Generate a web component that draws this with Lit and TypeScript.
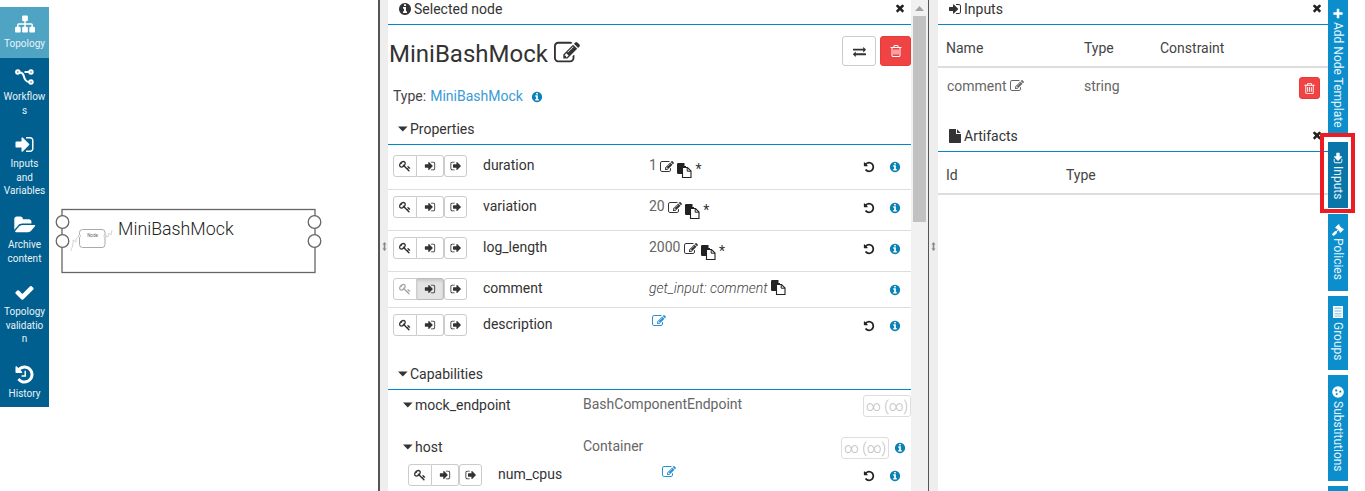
import { LitElement, html, css } from 'lit';
import { customElement } from 'lit/decorators.js';

// font-awesome 4 outlines, 1792 grid
const P: Record<string, string> = {
  sitemap: 'M1792 1248v320q0 40-28 68t-68 28h-320q-40 0-68-28t-28-68v-320q0-40 28-68t68-28h96v-192h-512v192h96q40 0 68 28t28 68v320q0 40-28 68t-68 28h-320q-40 0-68-28t-28-68v-320q0-40 28-68t68-28h96v-192h-512v192h96q40 0 68 28t28 68v320q0 40-28 68t-68 28h-320q-40 0-68-28t-28-68v-320q0-40 28-68t68-28h96v-192q0-52 38-90t90-38h512v-192h-96q-40 0-68-28t-28-68v-320q0-40 28-68t68-28h320q40 0 68 28t28 68v320q0 40-28 68t-68 28h-96v192h512q52 0 90 38t38 90v192h96q40 0 68 28t28 68z',
  signIn: 'M1312 896q0 26-19 45l-544 544q-19 19-45 19t-45-19-19-45v-288h-448q-26 0-45-19t-19-45v-384q0-26 19-45t45-19h448v-288q0-26 19-45t45-19 45 19l544 544q19 19 19 45zm352-352v704q0 119-84.5 203.5t-203.5 84.5h-320q-13 0-22.5-9.5t-9.5-22.5v-64q0-13 9.5-22.5t22.5-9.5h320q66 0 113-47t47-113v-704q0-66-47-113t-113-47h-320q-13 0-22.5-9.5t-9.5-22.5v-64q0-13 9.5-22.5t22.5-9.5h320q119 0 203.5 84.5t84.5 203.5z',
  signOut: 'M704 1440q0 4 1 20t.5 26.5-3 23.5-10 19.5-20.5 6.5h-320q-119 0-203.5-84.5t-84.5-203.5v-704q0-119 84.5-203.5t203.5-84.5h320q13 0 22.5 9.5t9.5 22.5q0 4 1 20t.5 26.5-3 23.5-10 19.5-20.5 6.5h-320q-66 0-113 47t-47 113v704q0 66 47 113t113 47h312l11.5 1 11.5 3 8 5.5 7 9 2 13.5zm928-544q0 26-19 45l-544 544q-19 19-45 19t-45-19-19-45v-288h-448q-26 0-45-19t-19-45v-384q0-26 19-45t45-19h448v-288q0-26 19-45t45-19 45 19l544 544q19 19 19 45z',
  key: 'M832 512q0-80-56-136t-136-56-136 56-56 136q0 42 19 83-41-19-83-19-80 0-136 56t-56 136 56 136 136 56 136-56 56-136q0-42-19-83 41 19 83 19 80 0 136-56t56-136zm851 704q0 17-49 66t-66 49q-9 0-28.5-16t-36.5-33-38.5-40-24.5-26l-96 96 220 220q28 28 28 68 0 42-39 81t-81 39q-40 0-68-28l-671-671q-176 131-365 131-163 0-265.5-102.5t-102.5-265.5q0-160 95-313t248-248 313-95q163 0 265.5 102.5t102.5 265.5q0 189-131 365l355 355 96-96q-3-3-26-24.5t-40-38.5-33-36.5-16-28.5q0-17 49-66t66-49q13 0 23 10 6 6 46 44.5t82 79.5 86.5 86 73 78 28.5 41z',
  edit: 'M888 1184l116-116-152-152-116 116v56h96v96h56zm440-720q-16-16-33 1l-350 350q-17 17-1 33t33-1l350-350q17-17 1-33zm80 594v190q0 119-84.5 203.5t-203.5 84.5h-832q-119 0-203.5-84.5t-84.5-203.5v-832q0-119 84.5-203.5t203.5-84.5h832q63 0 117 25 15 7 18 23 3 17-9 29l-49 49q-14 14-32 8-23-6-45-6h-832q-66 0-113 47t-47 113v832q0 66 47 113t113 47h832q66 0 113-47t47-113v-126q0-13 9-22l64-64q15-15 35-7t20 29zm-96-738l288 288-672 672h-288v-288zm444 132l-92 92-288-288 92-92q28-28 68-28t68 28l152 152q28 28 28 68t-28 68z',
  info: 'M1152 1376v-160q0-14-9-23t-23-9h-96v-512q0-14-9-23t-23-9h-320q-14 0-23 9t-9 23v160q0 14 9 23t23 9h96v320h-96q-14 0-23 9t-9 23v160q0 14 9 23t23 9h448q14 0 23-9t9-23zm-128-896v-160q0-14-9-23t-23-9h-192q-14 0-23 9t-9 23v160q0 14 9 23t23 9h192q14 0 23-9t9-23zm640 416q0 209-103 385.5t-279.5 279.5-385.5 103-385.5-103-279.5-279.5-103-385.5 103-385.5 279.5-279.5 385.5-103 385.5 103 279.5 279.5 103 385.5z',
  times: 'M1490 1322q0 40-28 68l-136 136q-28 28-68 28t-68-28l-294-294-294 294q-28 28-68 28t-68-28l-136-136q-28-28-28-68t28-68l294-294-294-294q-28-28-28-68t28-68l136-136q28-28 68-28t68 28l294 294 294-294q28-28 68-28t68 28l136 136q28 28 28 68t-28 68l-294 294 294 294q28 28 28 68z',
  trash: 'M704 736v576q0 14-9 23t-23 9h-64q-14 0-23-9t-9-23v-576q0-14 9-23t23-9h64q14 0 23 9t9 23zm256 0v576q0 14-9 23t-23 9h-64q-14 0-23-9t-9-23v-576q0-14 9-23t23-9h64q14 0 23 9t9 23zm256 0v576q0 14-9 23t-23 9h-64q-14 0-23-9t-9-23v-576q0-14 9-23t23-9h64q14 0 23 9t9 23zm128 724v-948h-896v948q0 22 7 40.5t14.5 27 10.5 8.5h832q3 0 10.5-8.5t14.5-27 7-40.5zm-672-1076h448l-48-117q-7-9-17-11h-317q-10 2-17 11zm928 32v64q0 14-9 23t-23 9h-96v948q0 83-47 143.5t-113 60.5h-832q-66 0-113-63t-47-145v-944h-96q-14 0-23-9t-9-23v-64q0-14 9-23t23-9h309l70-167q15-37 54-63t79-26h320q40 0 79 26t54 63l70 167h309q14 0 23 9t9 23z',
  check: 'M1671 566q0 40-28 68l-724 724-136 136q-28 28-68 28t-68-28l-136-136-362-362q-28-28-28-68t28-68l136-136q28-28 68-28t68 28l294 295 656-657q28-28 68-28t68 28l136 136q28 28 28 68z',
  history: 'M1664 896q0 156-61 298t-164 245-245 164-298 61q-172 0-327-72.5t-264-204.5q-7-10-6.5-22.5t8.5-20.5l137-138q10-9 25-9 16 2 23 12 73 95 179 147t225 52q104 0 198.5-40.5t163.5-109.5 109.5-163.5 40.5-198.5-40.5-198.5-109.5-163.5-163.5-109.5-198.5-40.5q-98 0-188 35.5t-160 101.5l137 138q31 30 14 69-17 40-59 40h-448q-26 0-45-19t-19-45v-448q0-42 40-59 39-17 69 14l130 129q107-101 244.5-156.5t284.5-55.5q156 0 298 61t245 164 164 245 61 298zm-640-288v448q0 14-9 23t-23 9h-320q-14 0-23-9t-9-23v-64q0-14 9-23t23-9h224v-352q0-14 9-23t23-9h64q14 0 23 9t9 23z',
  undo: 'M1664 896q0 156-61 298t-164 245-245 164-298 61q-172 0-327-72.5t-264-204.5q-7-10-6.5-22.5t8.5-20.5l137-138q10-9 25-9 16 2 23 12 73 95 179 147t225 52q104 0 198.5-40.5t163.5-109.5 109.5-163.5 40.5-198.5-40.5-198.5-109.5-163.5-163.5-109.5-198.5-40.5q-98 0-188 35.5t-160 101.5l137 138q31 30 14 69-17 40-59 40h-448q-26 0-45-19t-19-45v-448q0-42 40-59 39-17 69 14l130 129q107-101 244.5-156.5t284.5-55.5q156 0 298 61t245 164 164 245 61 298z',
  exchange: 'M1792 1184v192q0 13-9.5 22.5t-22.5 9.5h-1376v192q0 13-9.5 22.5t-22.5 9.5q-12 0-24-10l-319-320q-9-9-9-22 0-14 9-23l320-320q9-9 23-9 13 0 22.5 9.5t9.5 22.5v192h1376q13 0 22.5 9.5t9.5 22.5zm0-544q0 14-9 23l-320 320q-9 9-23 9-13 0-22.5-9.5t-9.5-22.5v-192h-1376q-13 0-22.5-9.5t-9.5-22.5v-192q0-13 9.5-22.5t22.5-9.5h1376v-192q0-14 9-23t23-9q12 0 24 10l319 319q9 9 9 23z',
  file: 'M1152 512v-472q22 14 36 28l408 408q14 14 28 36h-472zm-128 32q0 40 28 68t68 28h544v1056q0 40-28 68t-68 28h-1344q-40 0-68-28t-28-68v-1600q0-40 28-68t68-28h800v544z',
  plus: 'M1600 736v192q0 40-28 68t-68 28h-416v416q0 40-28 68t-68 28h-192q-40 0-68-28t-28-68v-416h-416q-40 0-68-28t-28-68v-192q0-40 28-68t68-28h416v-416q0-40 28-68t68-28h192q40 0 68 28t28 68v416h416q40 0 68 28t28 68z',
  folder: 'M1879 952q0 31-31 66l-336 396q-43 51-120.5 86.5t-143.5 35.5h-1088q-34 0-60.5-13t-26.5-43q0-31 31-66l336-396q43-51 120.5-86.5t143.5-35.5h1088q34 0 60.5 13t26.5 43zm-343-344v160h-832q-94 0-197 47.5t-164 119.5l-337 396-5 6q0-4-.5-12.5t-.5-12.5v-960q0-92 66-158t158-66h320q92 0 158 66t66 158v32h544q92 0 158 66t66 158z',
  gavel: 'M1771 1536q0 53-37 90l-107 108q-39 37-91 37-53 0-90-37l-363-364q-38-36-38-90 0-53 43-96l-256-256-126 126q-14 14-34 14t-34-14q2 2 12.5 12t12.5 13 10 11.5 10 13.5 6 13.5 5.5 16.5 1.5 18q0 38-28 68-3 3-16.5 18t-19 20.5-18.5 16.5-22 15.5-22 9-26 4.5q-40 0-68-28l-408-408q-28-28-28-68 0-13 4.5-26t9-22 15.5-22 16.5-18.5 20.5-19 18-16.5q30-28 68-28 10 0 18 1.5t16.5 5.5 13.5 6 13.5 10 11.5 10 13 12.5 12 12.5q-14-14-14-34t14-34l348-348q14-14 34-14t34 14q-2-2-12.5-12t-12.5-13-10-11.5-10-13.5-6-13.5-5.5-16.5-1.5-18q0-38 28-68 3-3 16.5-18t19-20.5 18.5-16.5 22-15.5 22-9 26-4.5q40 0 68 28l408 408q28 28 28 68 0 13-4.5 26t-9 22-15.5 22-16.5 18.5-20.5 19-18 16.5q-30 28-68 28-10 0-18-1.5t-16.5-5.5-13.5-6-13.5-10-11.5-10-13-12.5-12-12.5q14 14 14 34t-14 34l-126 126 256 256q43-43 96-43 52 0 91 37l363 363q37 39 37 91z',
};

const fa = (name: string, size: number, cls = '') =>
  html`<svg class="fa ${cls}" width=${size} height=${size} viewBox="0 0 1792 1792" fill="currentColor"><path d=${P[name]}></path></svg>`;

const caret = html`<svg class="caret" width="10" height="6" viewBox="0 0 10 6"><path d="M0 .5h9.6L4.8 5.6z" fill="#333"></path></svg>`;

// solid sheet behind an outlined one, not the stock fa-files icon
const copyIcon = html`<svg class="copy" width="15" height="15" viewBox="0 0 15 15">
  <path d="M0 1.2Q0 0 1.2 0H7.5V3H9V11H1.2Q0 11 0 9.8z" fill="#222"></path>
  <path d="M5.5 4.5H10.5L14 8V14.5H5.5z" fill="#fff" stroke="#222" stroke-width="1.1"></path>
  <path d="M10.2 4.5V8.2H14" fill="none" stroke="#222" stroke-width="1"></path>
</svg>`;

const workflowIcon = html`<svg width="20" height="18" viewBox="0 0 20 18" fill="none" stroke="#fff" stroke-width="2">
  <circle cx="2.8" cy="4" r="1.7"></circle><circle cx="16" cy="4" r="1.7"></circle><circle cx="16" cy="14" r="1.7"></circle>
  <path d="M5 4.4c5 .4 2.5 3.6 5.5 7.600 1 1.400 2 2 3.600 2M14 4h-4.500"></path>
</svg>`;

const groupsIcon = html`<svg class="tab-ic grp-ic" width="12" height="12" viewBox="0 0 12 12">
  <rect x="1" y="0" width="10" height="12" fill="#fff"></rect>
  <path d="M2.500 1.500h7v1.500h-7zM2.500 4.200h7v1.500h-7zM2.500 6.900h7v1.500h-7zM2.500 9.500h7v1.200h-7z" fill="#9fd2ec"></path>
</svg>`;

const recycleIcon = html`<svg class="tab-ic" width="12" height="12" viewBox="0 0 14 14">
  <circle cx="7" cy="7" r="6.800" fill="#fff"></circle>
  <path d="M4.500 3.600l2 1.300-1.200 1.900-1.900-1.100zM10.400 5.100l.7 2.200-2.200.5-.5-2.100zM5.500 10.800l-1.500-1.600 1.700-1.400 1.300 1.700z" fill="#0b8ecb"></path>
</svg>`;

const navItems = [
  { icon: fa('sitemap', 20), label: 'Topology', cls: 'active' },
  { icon: workflowIcon, label: 'Workflows', cls: 'wf' },
  { icon: fa('signIn', 21), label: 'Inputs and Variables', cls: '' },
  { icon: html`<svg width="22" height="20" viewBox="0 0 1920 1792" fill="#fff"><path d=${P.folder}></path></svg>`, label: 'Archive content', cls: '' },
  { icon: fa('check', 21), label: 'Topology validation', cls: '' },
  { icon: fa('history', 21), label: 'History', cls: '' },
];

const props = [
  { name: 'duration', value: '1', kind: 'scalar' },
  { name: 'variation', value: '20', kind: 'scalar' },
  { name: 'log_length', value: '2000', kind: 'scalar' },
  { name: 'comment', value: 'get_input: comment', kind: 'input' },
  { name: 'description', value: '', kind: 'empty' },
];

const tabs = [
  { label: 'Add Node Template', icon: fa('plus', 12, 'tab-ic'), cls: 'add' },
  { label: 'Inputs', icon: fa('signIn', 12, 'tab-ic rot'), cls: 'on' },
  { label: 'Policies', icon: fa('gavel', 12, 'tab-ic rot'), cls: 'pol' },
  { label: 'Groups', icon: groupsIcon, cls: 'grp' },
  { label: 'Substitutions', icon: recycleIcon, cls: 'sub' },
  { label: '', icon: '', cls: 'more' },
];

@customElement('app-root')
export class AppRoot extends LitElement {
  static styles = css`
    :host {
      display: block;
      width: 1365px;
      height: 491px;
      overflow: hidden;
      background: #fff;
      font-family: Roboto, 'Liberation Sans', sans-serif;
      font-size: 14px;
      color: #333;
    }
    * { box-sizing: border-box; }
    svg { display: block; flex-shrink: 0; }
    .page { position: relative; display: flex; height: 491px; }

    .nav { width: 49px; margin-top: 7px; height: 400px; background: #005f8f; flex-shrink: 0; }
    .nav-item {
      display: flex; flex-direction: column; align-items: center;
      padding: 7px 3px 0; color: #e8f3f8; font-size: 10px; line-height: 13.6px; text-align: center;
      overflow-wrap: anywhere;
    }
    .nav-item .ic { height: 20px; display: flex; align-items: center; justify-content: center; margin-bottom: 3px; color: #fff; }
    .nav-item.active { background: #4fa3c3; }
    .nav-item.wf { padding-top: 9px; }

    .canvas { position: relative; width: 329px; flex-shrink: 0; }
    .node { position: absolute; left: 0; top: 200px; }

    .gutter {
      width: 10px; flex-shrink: 0; background: #eee; display: flex; align-items: center; justify-content: center;
      color: #888; padding-top: 2px;
    }
    .gutter.first { border-left: 2px solid #555; }
    .gutter.second { width: 10px; border-left: 1px solid #555; }
    .grip { width: 5px; height: 9px; }

    .panel { width: 523px; flex-shrink: 0; height: 491px; overflow: hidden; }
    .right { width: 390px; flex-shrink: 0; height: 491px; overflow: hidden; }

    .scroll { width: 17px; flex-shrink: 0; background: #f1f1f1; display: flex; flex-direction: column; align-items: center; }
    .scroll .up { height: 16px; display: flex; align-items: center; justify-content: center; }
    .scroll .thumb { width: 13px; height: 206px; background: #c1c1c1; }

    .head { height: 25px; border-bottom: 1px solid #0088cc; display: flex; align-items: center; gap: 2px; padding: 0 0 6px 10px; line-height: 18px; }
    .head .close { margin-left: auto; margin-right: 5px; margin-top: -3px; color: #222; }
    .artifacts { margin-top: 19px; }

    .title { display: flex; align-items: center; height: 30px; margin-top: 11px; padding-left: 1px; }
    .title h1 { margin: 6px 0 0; font-size: 24px; font-weight: 400; line-height: 30px; }
    .title .pen { margin: 4px 0 0 6px; color: #333; }
    .btn { height: 30px; border-radius: 3px; display: flex; align-items: center; justify-content: center; }
    .swap { width: 34px; border: 1px solid #ccc; background: #fff; margin-left: auto; color: #333; }
    .del { width: 31px; background: #f04444; color: #fff; border: 1px solid #e93a3a; margin-left: 4px; }

    .type { display: flex; align-items: center; margin-top: 21px; padding-left: 5px; height: 18px; color: #444; }
    .type a { color: #3a9bd5; margin-left: 4px; }
    .type .fa { color: #0b82b5; margin: 2px 0 0 8px; }

    .section { display: flex; align-items: center; gap: 2px; height: 27px; margin-top: 13px; padding: 0 0 5px 10px; border-bottom: 1px solid #0088cc; }
    .section.caps { margin-top: 0; }

    .rows { padding-top: 4px; }
    .row {
      display: grid; grid-template-columns: 90px 166px 1fr 27px 21px;
      padding-left: 5px; height: 41px; padding-top: 6px; border-bottom: 1px solid #ddd; align-items: start;
    }
    .row.short { height: 36px; }
    .row.last { border-bottom: 0; height: 55px; }
    .row.nested { padding-left: 20px; grid-template-columns: 90px 151px 1fr 27px 21px; border-bottom: 0; height: 27px; padding-top: 0; }

    .group { display: flex; width: 74px; height: 22px; }
    .group span {
      display: flex; align-items: center; justify-content: center; border: 1px solid #ccc; background: #fff; color: #333;
    }
    .group span:nth-child(1) { width: 24px; border-radius: 3px 0 0 3px; }
    .group span:nth-child(2) { width: 27px; border-left: 0; border-radius: 0 3px 3px 0; }
    .group span:nth-child(3) { width: 23px; border-radius: 3px; }
    .group span.dim { color: #aaa; }
    .group span.on { background: #e4e4e4; border-color: #bbb; box-shadow: inset 0 2px 3px rgba(0,0,0,.12); }

    .name { line-height: 18px; margin-top: 1px; }
    .value { display: flex; align-items: flex-start; color: #666; line-height: 16px; margin-top: 2px; }
    .value .fa { margin: 3px 0 0 3.5px; color: #333; }
    .value .copy { margin: 6px 0 0 3px; }
    .value .star { margin: 4px 0 0 3px; color: #333; font-size: 14px; }
    .value.input { font-style: italic; font-weight: 300; color: #444; }
    .value.input .copy { margin-top: 0; }
    .value.empty { margin-top: 0; }
    .value.empty .fa { color: #2a92d2; margin: 0 0 0 3px; }
    .value.nested-edit { margin-top: 1px; }
    .value.nested-edit .fa { margin-left: 13px; }
    .act { display: flex; justify-content: flex-start; padding-top: 6px; color: #222; }
    .act.i { color: #0b82b5; margin-left: -1px; }

    .cap { display: grid; grid-template-columns: 180px 1fr auto; padding: 0 0 0 15px; height: 42px; align-items: start; }
    .cap.open { height: 27px; }
    .cap .cn { display: flex; align-items: center; gap: 2px; height: 19px; }
    .cap .ct { color: #666; height: 19px; line-height: 19px; }
    .cap .side { display: flex; align-items: center; gap: 5px; }
    .badge { height: 22px; width: 48px; border: 1px solid #ddd; border-radius: 3px; color: #bbb; display: flex; align-items: center; justify-content: center; font-size: 14px; font-weight: 300; }
    .cap-list { padding-top: 5px; }
    .side .fa { color: #0b82b5; margin-right: 5px; }

    .tr { display: grid; align-items: center; padding-left: 8px; }
    .tr.h { height: 43px; border-bottom: 2px solid #ddd; color: #444; padding-top: 5px; }
    .inputs-grid { grid-template-columns: 138px 76px 1fr; }
    .art-grid { grid-template-columns: 120px 1fr; }
    .comment-row { display: grid; grid-template-columns: 137px 1fr 29px; padding-left: 9px; height: 40px; align-items: center; color: #666; }
    .comment-row .c { display: flex; align-items: center; gap: 3px; margin-top: -4px; }
    .comment-row .t { margin-top: -4px; }
    .comment-row .small-del { width: 21px; height: 22px; background: #f04444; border: 1px solid #e93a3a; border-radius: 3px; color: #fff; display: flex; align-items: center; justify-content: center; }

    .tabs { width: 20px; flex-shrink: 0; display: flex; flex-direction: column; gap: 5px; margin-top: -5px; }
    .tab {
      writing-mode: vertical-rl; display: flex; align-items: center; background: #0b8ecb; color: #e6f4fb;
      width: 20px; font-size: 12px; line-height: 20px; flex-shrink: 0; overflow: hidden; white-space: nowrap;
    }
    .tab .tab-ic { color: #fff; margin-bottom: 2px; }
    .tab .rot { transform: rotate(90deg); }
    .tab .grp-ic { margin-bottom: 4px; }
    .tab.add { height: 140px; padding-top: 13px; }
    .tab.on { height: 66px; margin-top: 2px; background: #0a75a8; padding-top: 10px; }
    .tab.pol { height: 77px; margin-top: 1px; padding-top: 10px; }
    .tab.grp { height: 74px; padding-top: 10px; }
    .tab.sub { height: 106px; padding-top: 11px; }
    .tab.sub .tab-ic { margin-bottom: 3px; }
    .tab.more { height: 20px; }

    .mark { position: absolute; left: 1320px; top: 133px; width: 35px; height: 80px; border: 4px solid #ed1c24; }
  `;

  groupBtns(kind: string) {
    return html`<div class="group">
      <span class=${kind === 'input' ? 'dim' : ''}>${fa('key', 12)}</span>
      <span class=${kind === 'input' ? 'on' : ''}>${fa('signIn', 12)}</span>
      <span>${fa('signOut', 12)}</span>
    </div>`;
  }

  valueCell(p: { value: string; kind: string }) {
    if (p.kind === 'scalar') {
      return html`<div class="value">${p.value}${fa('edit', 14)}${copyIcon}<span class="star">*</span></div>`;
    }
    if (p.kind === 'input') {
      return html`<div class="value input">${p.value}${copyIcon}</div>`;
    }
    return html`<div class="value empty">${fa('edit', 14)}</div>`;
  }

  render() {
    return html`
      <div class="page">
        <nav class="nav">
          ${navItems.map((n, i) => html`
            <div class="nav-item ${n.cls}" style="height:${[51, 69, 81, 67, 82, 50][i]}px">
              <div class="ic">${n.icon}</div>
              <div>${n.label}</div>
            </div>`)}
        </nav>

        <div class="canvas">
          <svg class="node" width="329" height="80" viewBox="0 0 329 80">
            <rect x="13" y="9.500" width="253" height="63" fill="#fff" stroke="#666" stroke-width="1.300"></rect>
            <text x="69" y="35" font-family="Roboto" font-weight="300" font-size="17.800" fill="#222">MiniBashMock</text>
            <circle cx="13.500" cy="22" r="6.300" fill="#fff" stroke="#666" stroke-width="1.300"></circle>
            <circle cx="13.500" cy="41" r="6.300" fill="#fff" stroke="#666" stroke-width="1.300"></circle>
            <circle cx="265.500" cy="22" r="6.300" fill="#fff" stroke="#666" stroke-width="1.300"></circle>
            <circle cx="265.500" cy="41" r="6.300" fill="#fff" stroke="#666" stroke-width="1.300"></circle>
            <rect x="30.500" y="29.500" width="25.500" height="18" rx="3" fill="#fff" stroke="#aaa" stroke-width="1"></rect>
            <text x="43.500" y="37" text-anchor="middle" font-family="Roboto" font-size="4.500" fill="#666">Node</text>
            <path d="M30 36l-3 3v3l-3-2v4l-2 7M57 36l2 1 1-4 2 2 1-5" fill="none" stroke="#d5d5d5" stroke-width="1"></path>
            <circle cx="30.500" cy="36" r="1.200" fill="#fff" stroke="#bbb" stroke-width=".7"></circle>
            <circle cx="56" cy="36" r="1.200" fill="#fff" stroke="#bbb" stroke-width=".7"></circle>
          </svg>
        </div>

        <div class="gutter first">
          <svg class="grip" viewBox="0 0 5 9"><path d="M2.500 0l2 2.500H3.300v4H4.500L2.500 9 .5 6.500h1.200v-4H.5z" fill="#888"></path></svg>
        </div>

        <section class="panel">
          <div class="head">
            ${fa('info', 14)}<span>Selected node</span>${fa('times', 12, 'close')}
          </div>
          <div class="title">
            <h1>MiniBashMock</h1>
            ${fa('edit', 26, 'pen')}
            <div class="btn swap">${fa('exchange', 13)}</div>
            <div class="btn del">${fa('trash', 14)}</div>
          </div>
          <div class="type">Type: <a>MiniBashMock</a>${fa('info', 12)}</div>

          <div class="section">${caret}<span>Properties</span></div>
          <div class="rows">
            ${props.map((p, i) => html`
              <div class="row ${i === 3 ? 'short' : ''} ${i === 4 ? 'last' : ''}">
                ${this.groupBtns(p.kind)}
                <div class="name">${p.name}</div>
                ${this.valueCell(p)}
                <div class="act">${p.kind === 'input' ? '' : fa('undo', 12)}</div>
                <div class="act i">${fa('info', 12)}</div>
              </div>`)}
          </div>

          <div class="section caps">${caret}<span>Capabilities</span></div>
          <div class="cap-list">
            <div class="cap">
              <div class="cn">${caret}<span>mock_endpoint</span></div>
              <div class="ct">BashComponentEndpoint</div>
              <div class="side"><span class="badge">∞ (∞)</span></div>
            </div>
            <div class="cap open">
              <div class="cn">${caret}<span>host</span></div>
              <div class="ct">Container</div>
              <div class="side"><span class="badge">∞ (∞)</span>${fa('info', 12)}</div>
            </div>
            <div class="row nested">
              ${this.groupBtns('')}
              <div class="name">num_cpus</div>
              <div class="value empty nested-edit">${fa('edit', 14)}</div>
              <div class="act">${fa('undo', 12)}</div>
              <div class="act i">${fa('info', 12)}</div>
            </div>
          </div>
        </section>

        <div class="scroll">
          <div class="up"><svg width="9" height="5" viewBox="0 0 9 5"><path d="M0 5L4.500 0 9 5z" fill="#a3a3a3"></path></svg></div>
          <div class="thumb"></div>
        </div>

        <div class="gutter second">
          <svg class="grip" viewBox="0 0 5 9"><path d="M2.500 0l2 2.500H3.300v4H4.500L2.500 9 .5 6.500h1.200v-4H.5z" fill="#888"></path></svg>
        </div>

        <section class="right">
          <div class="head">${fa('signIn', 14)}<span>Inputs</span>${fa('times', 12, 'close')}</div>
          <div class="tr h inputs-grid"><span>Name</span><span>Type</span><span>Constraint</span></div>
          <div class="comment-row">
            <div class="c">comment ${fa('edit', 14)}</div>
            <div class="t">string</div>
            <div class="small-del">${fa('trash', 13)}</div>
          </div>
          <div class="head artifacts">${fa('file', 14)}<span>Artifacts</span>${fa('times', 12, 'close')}</div>
          <div class="tr h art-grid"><span>Id</span><span>Type</span></div>
        </section>

        <aside class="tabs">
          ${tabs.map((t) => html`<div class="tab ${t.cls}">${t.icon}${t.label ? html`<span>${t.label}</span>` : ''}</div>`)}
        </aside>

        <div class="mark"></div>
      </div>
    `;
  }
}
